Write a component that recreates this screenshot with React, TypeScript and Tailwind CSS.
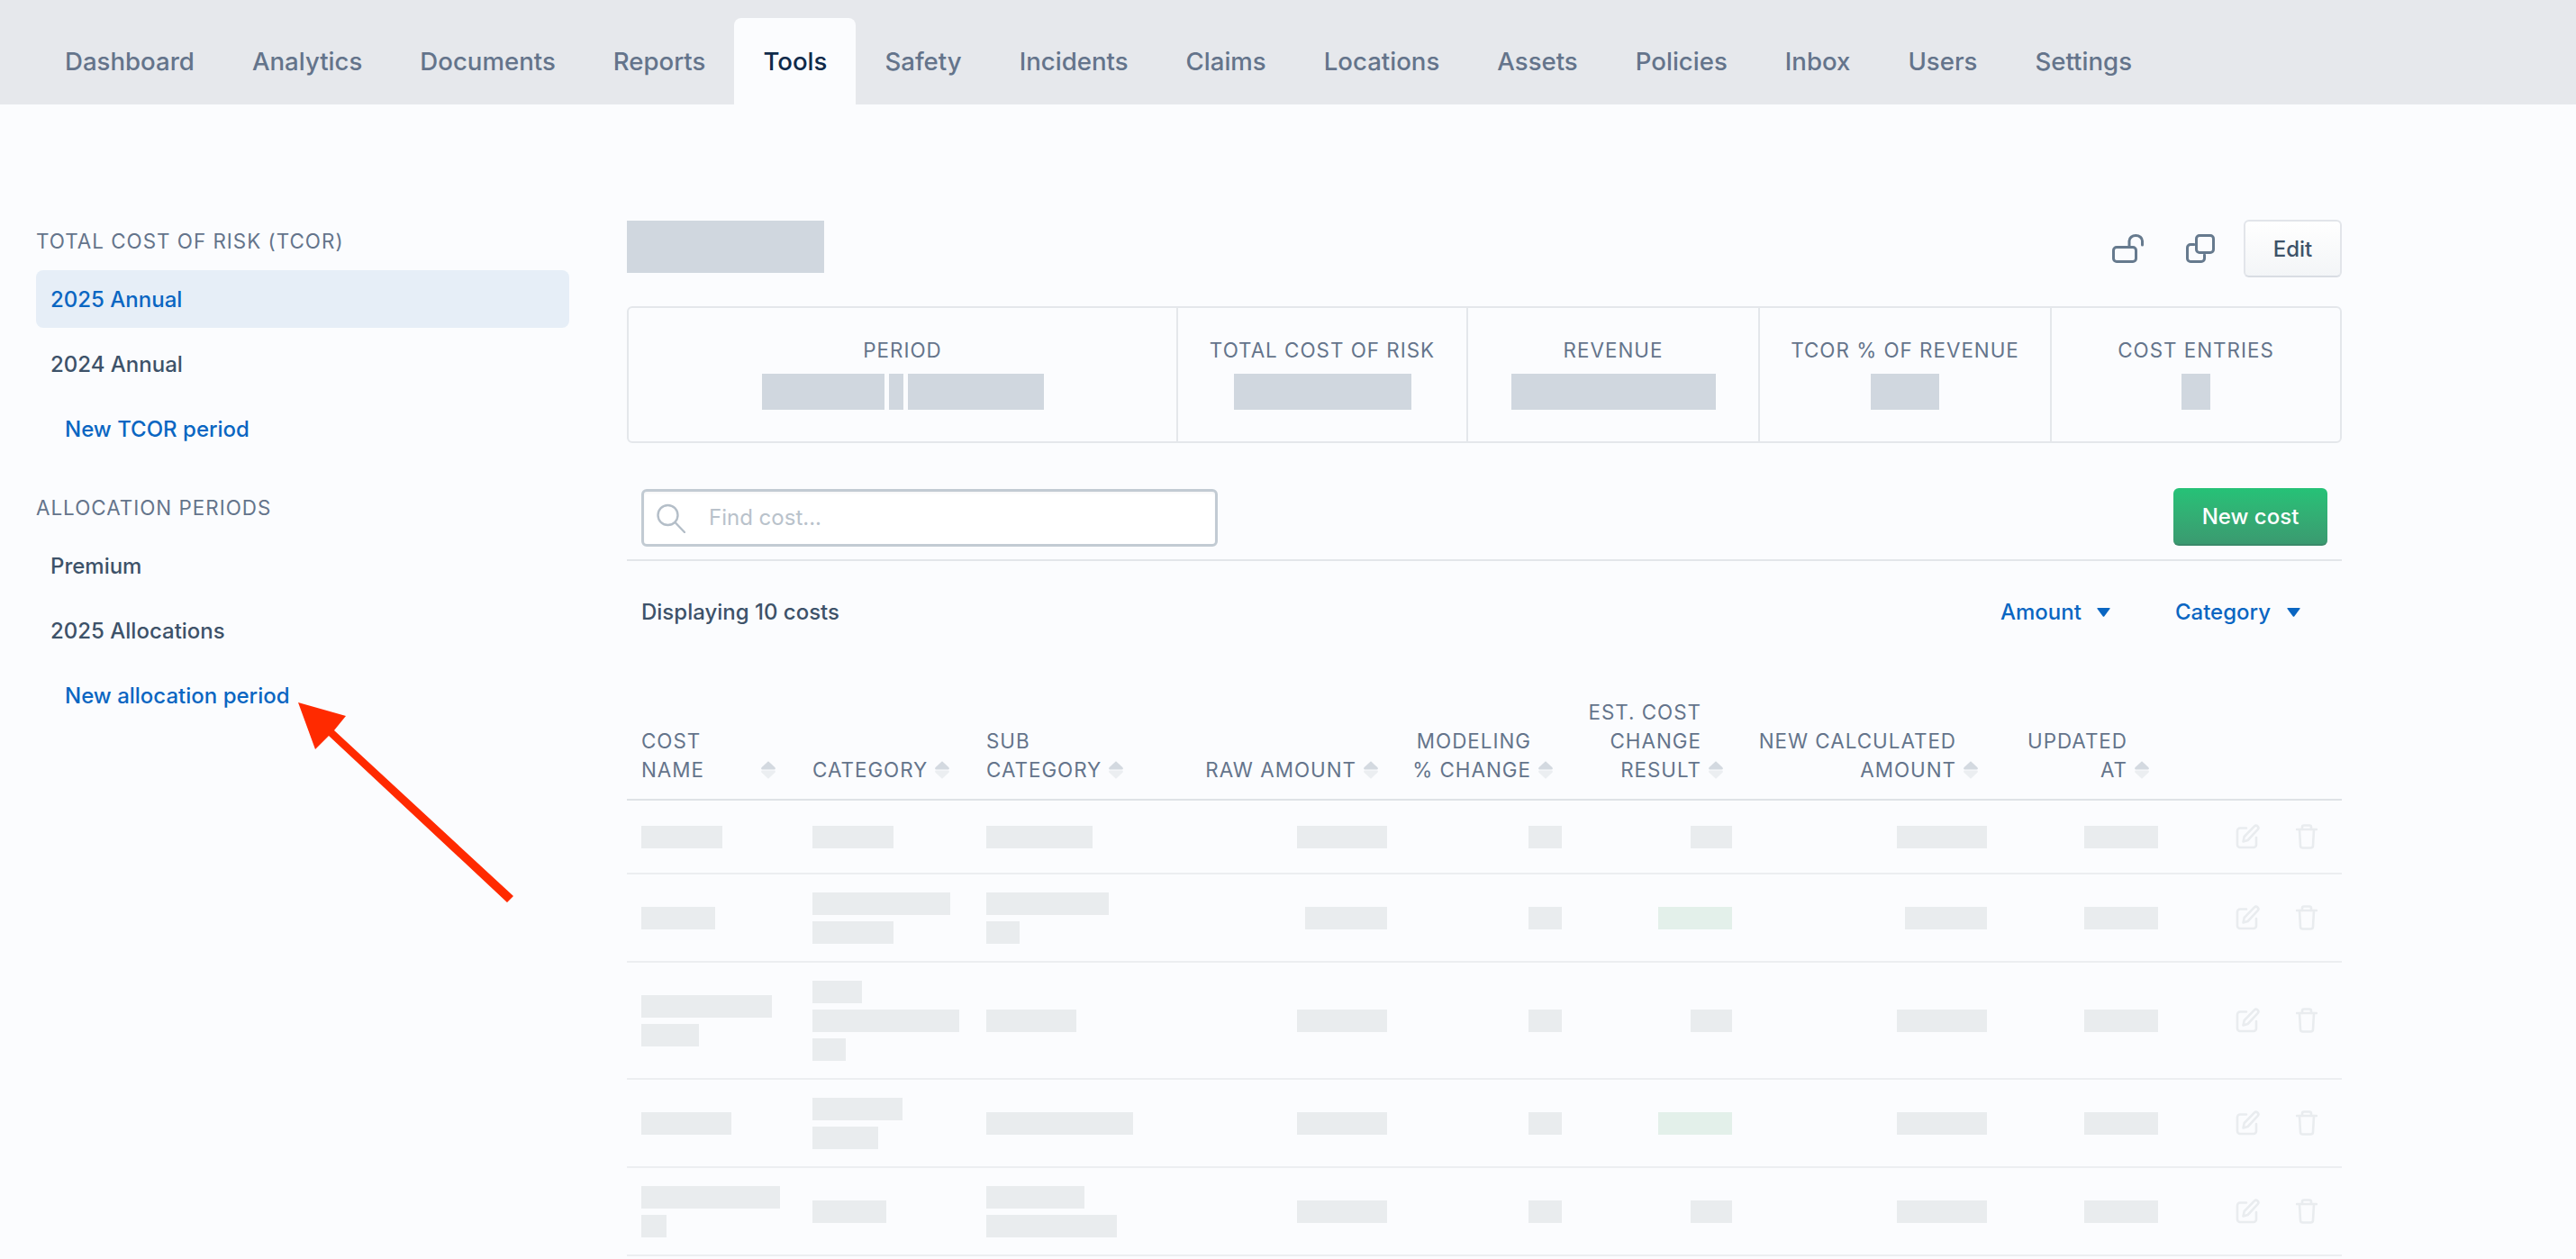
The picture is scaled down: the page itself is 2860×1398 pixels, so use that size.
const TABS = ["Dashboard", "Analytics", "Documents", "Reports", "Tools", "Safety", "Incidents", "Claims", "Locations", "Assets", "Policies", "Inbox", "Users", "Settings"];

type Bar = number | { w: number; green: boolean };
type Row = { name: number[]; category: number[]; sub: number[]; raw: number; result: Bar; calc: number };

const ROWS: Row[] = [
  { name: [90], category: [90], sub: [118], raw: 100, result: 46, calc: 100 },
  { name: [82], category: [153, 90], sub: [136, 37], raw: 91, result: { w: 82, green: true }, calc: 91 },
  { name: [145, 64], category: [55, 163, 37], sub: [100], raw: 100, result: 46, calc: 100 },
  { name: [100], category: [100, 73], sub: [163], raw: 100, result: { w: 82, green: true }, calc: 100 },
  { name: [154, 28], category: [82], sub: [109, 145], raw: 100, result: 46, calc: 100 },
];

function Stat({ label, bars, className }: { label: string; bars: number[]; className: string }) {
  return (
    <div className={`flex flex-col items-center pt-[31px] ${className}`}>
      <div className="h-8 text-[22.4px] leading-8 tracking-[1px] text-[#64748b]">{label}</div>
      <div className="mt-[10px] flex gap-[5px]">
        {bars.map((w, i) => (
          <div key={i} className="h-10 bg-[#d0d7df]" style={{ width: w }} />
        ))}
      </div>
    </div>
  );
}

function SortIcon() {
  return (
    <svg width="16" height="20" viewBox="0 0 16 20" className="mb-[6px] shrink-0">
      <path d="M8 0.3 L15.3 7 Q16.8 9.4 14.4 9.4 H1.6 Q-0.8 9.4 0.7 7 Z" fill="#d3d9e0" />
      <path d="M8 19.7 L15.3 13 Q16.8 10.6 14.4 10.6 H1.6 Q-0.8 10.6 0.7 13 Z" fill="#ebeef1" />
    </svg>
  );
}

function Caret() {
  return (
    <svg width="15" height="10" viewBox="0 0 15 10">
      <path d="M1 0 H14 Q15.2 0 14.5 1 L8.2 9.4 Q7.5 10 6.8 9.4 L0.5 1 Q-0.2 0 1 0 Z" fill="#0a66c2" />
    </svg>
  );
}

function Th({ lines, width, right, labelClass }: { lines: string[]; width: string; right?: boolean; labelClass?: string }) {
  return (
    <th className={`${width} border-b-2 border-[#dfe2e6] pb-[16px] pl-4 pr-[17px] align-bottom font-normal`}>
      <div className={`flex items-end gap-[8px] ${right ? "justify-end pr-[10px]" : ""}`}>
        <div className={`text-[22.4px] leading-8 tracking-[1px] text-[#64748b] ${right ? "text-right" : "text-left"} ${labelClass ?? ""}`}>
          {lines.map((l) => (
            <div key={l} className="whitespace-nowrap">{l}</div>
          ))}
        </div>
        <SortIcon />
      </div>
    </th>
  );
}

function Bars({ widths, right, green }: { widths: number[]; right?: boolean; green?: boolean }) {
  return (
    <div className={`flex flex-col ${right ? "items-end" : "items-start"}`}>
      {widths.map((w, i) => (
        <div key={i} className="flex h-8 items-center">
          <div className={`h-[25px] ${green ? "bg-[#e3f0ea]" : "bg-[#e9ecee]"}`} style={{ width: w }} />
        </div>
      ))}
    </div>
  );
}

function Td({ children }: { children: React.ReactNode }) {
  return <td className="border-b-2 border-[#eceef1] py-4 pl-4 pr-[17px] align-middle">{children}</td>;
}

function RowActions() {
  return (
    <td className="h-[82px] border-b-2 border-[#eceef1] pl-[69px] align-middle">
      <div className="flex items-center gap-[39px]">
        <svg width="28" height="28" viewBox="0 0 28 28" fill="none" stroke="#e9ecef" strokeWidth="2.6" strokeLinecap="round" strokeLinejoin="round">
          <path d="M12 4.5 H5 a3 3 0 0 0 -3 3 V23 a3 3 0 0 0 3 3 H20 a3 3 0 0 0 3 -3 V15" />
          <path d="M8.5 19.5 l1.2 -5.5 L20.8 2.6 a2.6 2.6 0 0 1 3.8 3.6 L13.6 18 z" />
        </svg>
        <svg width="24" height="28" viewBox="0 0 24 28" fill="none" stroke="#e9ecef" strokeWidth="2.6" strokeLinecap="round" strokeLinejoin="round">
          <path d="M1 6 H23" />
          <path d="M7 6 V3.5 a2 2 0 0 1 2 -2 h6 a2 2 0 0 1 2 2 V6" />
          <path d="M4 6 l1 18 a2.5 2.5 0 0 0 2.5 2.5 h9 a2.5 2.5 0 0 0 2.5 -2.5 l1 -18" />
        </svg>
      </div>
    </td>
  );
}

export default function App() {
  return (
    <div className="relative h-[1398px] w-[2860px] overflow-hidden bg-[#fbfcfe] font-['Inter',sans-serif]">
      <nav className="flex h-[116px] bg-[#e6e8ec] pl-[40px] pt-[20px]">
        {TABS.map((t) => (
          <div
            key={t}
            className={`flex h-[96px] items-center rounded-t-lg px-8 pt-px text-[27.6px] font-medium ${
              t === "Tools" ? "bg-[#fbfcfe] text-[#0f2a4a]" : "text-[#64748b]"
            }`}
          >
            {t}
          </div>
        ))}
      </nav>

      <div className="flex">
        <aside className="ml-[40px] w-[592px] pt-[136px]">
          <h4 className="h-8 text-[22.4px] font-normal leading-8 tracking-[1px] text-[#64748b]">TOTAL COST OF RISK (TCOR)</h4>
          <div className="mt-4 flex h-16 items-center rounded-lg bg-[#e6eef7] px-4 pt-[2px] text-[24px] font-medium text-[#0a66c2]">2025 Annual</div>
          <div className="mt-2 flex h-16 items-center px-4 pt-[2px] text-[24px] font-medium text-[#3d5269]">2024 Annual</div>
          <div className="mt-2 flex h-16 items-center pl-[32px] pt-[2px] text-[24px] font-medium text-[#0a66c2]">New TCOR period</div>

          <h4 className="mt-[40px] h-8 text-[22.4px] font-normal leading-8 tracking-[1px] text-[#64748b]">ALLOCATION PERIODS</h4>
          <div className="mt-4 flex h-16 items-center px-4 pt-[2px] text-[24px] font-medium text-[#3d5269]">Premium</div>
          <div className="mt-2 flex h-16 items-center px-4 pt-[2px] text-[24px] font-medium text-[#3d5269]">2025 Allocations</div>
          <div className="mt-2 flex h-16 items-center pl-[32px] pt-[2px] text-[24px] font-medium text-[#0a66c2]">New allocation period</div>
        </aside>

        <main className="ml-[64px] w-[1904px] pt-[128px]">
          <div className="flex h-16 items-start justify-between">
            <div className="mt-px h-[58px] w-[219px] bg-[#d0d7df]" />
            <div className="flex items-center">
              <svg width="35" height="32" viewBox="0 0 35 32" fill="none" stroke="#667a8e" strokeWidth="3" strokeLinecap="round">
                <rect x="1.5" y="14.5" width="25" height="16" rx="3.5" />
                <path d="M19 13 V7.5 a7.25 6 0 0 1 14.5 0 V12" />
              </svg>
              <svg width="32" height="32" viewBox="0 0 32 32" fill="none" stroke="#667a8e" strokeWidth="3" strokeLinecap="round" className="ml-[47px]">
                <rect x="11.5" y="1.5" width="19" height="19" rx="3.5" />
                <path d="M9 11.5 H5 a3.5 3.5 0 0 0 -3.5 3.5 V27 a3.5 3.5 0 0 0 3.5 3.5 H17 a3.5 3.5 0 0 0 3.5 -3.5 V23" />
              </svg>
              <button className="ml-[32px] h-16 w-[109px] rounded-md border-2 border-[#e2e5ea] border-b-[#d9dde3] bg-gradient-to-b from-white to-[#f3f5f7] pt-[2px] text-[24px] font-medium text-[#3d5269]">
                Edit
              </button>
            </div>
          </div>

          <div className="mt-8 flex h-[152px] rounded-md border-2 border-[#e4e7eb]">
            <div className="w-[608px]">
              <Stat label="PERIOD" bars={[136, 16, 151]} className="" />
            </div>
            <Stat label="TOTAL COST OF RISK" bars={[197]} className="w-[322px] border-l-2 border-[#e4e7eb]" />
            <Stat label="REVENUE" bars={[227]} className="w-[324px] border-l-2 border-[#e4e7eb]" />
            <Stat label="TCOR % OF REVENUE" bars={[76]} className="w-[324px] border-l-2 border-[#e4e7eb]" />
            <Stat label="COST ENTRIES" bars={[32]} className="flex-1 border-l-2 border-[#e4e7eb]" />
          </div>

          <div className="mt-[50px] flex h-[81px] items-start justify-between border-b-2 border-[#e3e6ea] pl-4 pr-4">
            <div className="mt-px flex h-16 w-[640px] items-center rounded-md border-[3px] border-[#c2cbd3] bg-white pl-[14px] shadow-[inset_0_2px_2px_rgba(0,0,0,0.03)]">
              <svg width="32" height="33" viewBox="0 0 32 33" fill="none" stroke="#b4bec8" strokeWidth="2.4" strokeLinecap="round" className="shrink-0">
                <circle cx="12.5" cy="13" r="11" />
                <path d="M20.5 21 L31 32" />
              </svg>
              <input
                placeholder="Find cost..."
                className="ml-[26px] min-w-0 flex-1 bg-transparent text-[24px] font-normal outline-none placeholder:text-[#b9c2cb]"
              />
            </div>
            <button className="h-16 w-[171px] rounded-md border-b-2 border-[#3b8a6a] bg-gradient-to-b from-[#25c277] to-[#3a9a70] pt-[2px] text-[24px] font-medium text-white">
              New cost
            </button>
          </div>

          <div className="mt-[25px] flex h-16 items-center pl-4 pr-[46px] text-[24px] font-medium">
            <div className="text-[#3d5269]">Displaying 10 costs</div>
            <div className="ml-auto flex items-center gap-[17px] text-[#0a66c2]">
              Amount
              <Caret />
            </div>
            <div className="ml-[72px] flex items-center gap-[18px] text-[#0a66c2]">
              Category
              <Caret />
            </div>
          </div>

          <table className="mt-[63px] w-[1904px] table-fixed border-separate border-spacing-0">
            <thead>
              <tr>
                <Th lines={["COST", "NAME"]} width="w-[190px]" labelClass="w-[125px]" />
                <Th lines={["CATEGORY"]} width="w-[193px]" />
                <Th lines={["SUB", "CATEGORY"]} width="w-[231px]" />
                <Th lines={["RAW AMOUNT"]} width="w-[247px]" right />
                <Th lines={["MODELING", "% CHANGE"]} width="w-[194px]" right />
                <Th lines={["EST. COST", "CHANGE", "RESULT"]} width="w-[189px]" right />
                <Th lines={["NEW CALCULATED", "AMOUNT"]} width="w-[283px]" right />
                <Th lines={["UPDATED", "AT"]} width="w-[190px]" right />
                <th className="w-[187px] border-b-2 border-[#dfe2e6]" />
              </tr>
            </thead>
            <tbody>
              {ROWS.map((r, i) => {
                const result = typeof r.result === "number" ? { w: r.result, green: false } : r.result;
                return (
                  <tr key={i}>
                    <Td><Bars widths={r.name} /></Td>
                    <Td><Bars widths={r.category} /></Td>
                    <Td><Bars widths={r.sub} /></Td>
                    <Td><Bars widths={[r.raw]} right /></Td>
                    <Td><Bars widths={[37]} right /></Td>
                    <Td><Bars widths={[result.w]} right green={result.green} /></Td>
                    <Td><Bars widths={[r.calc]} right /></Td>
                    <Td><Bars widths={[82]} right /></Td>
                    <RowActions />
                  </tr>
                );
              })}
            </tbody>
          </table>
        </main>
      </div>

      {/* annotation arrow over the sidebar link */}
      <svg width="250" height="230" viewBox="0 0 250 230" className="pointer-events-none absolute left-[325px] top-[775px]">
        <polygon points="6,5 59,20 46,36 245,220 238,227 40,42 25,57" fill="#ff2a00" />
      </svg>
    </div>
  );
}
